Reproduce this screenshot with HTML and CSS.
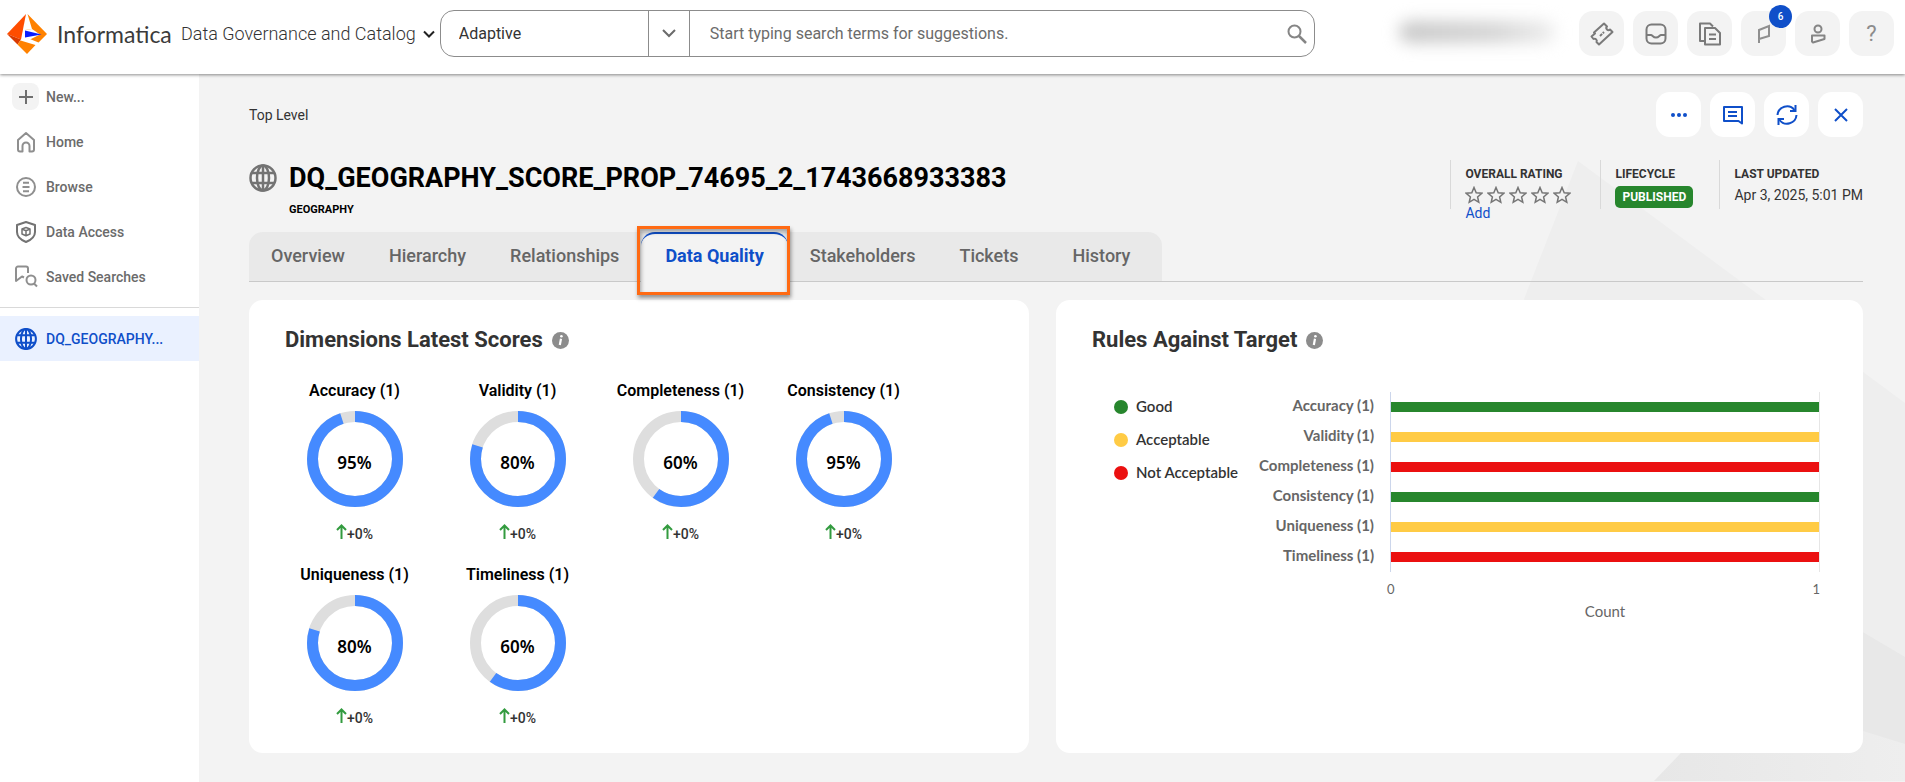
FILE: index.html
```html
<!DOCTYPE html>
<html lang="en">
<head>
<meta charset="utf-8">
<title>Data Governance and Catalog</title>
<link rel="stylesheet" href="styles.css">
</head>
<body>
<header class="topbar">
  <a class="brand" href="#" aria-label="Informatica home">
    <svg class="brand-mark" viewBox="0 0 40 40" aria-hidden="true">
      <path d="M19 0 0 20l14 5.500z" fill="#ff4d00"/>
      <path d="M0 20l10.500 10.500L14 25.500z" fill="#d93a00"/>
      <path d="M20.500 0 40 20l-8.500 8.500L18 23v-7l7-1z" fill="#ff8200"/>
      <path d="M13.500 26.500 28.500 31 20 40l-9.500-9.500z" fill="#ff8200"/>
      <path d="M25 15l-7 1v7.500l5 2 10-5z" fill="#fff"/>
      <path d="M18 16.500l16.500 4L18 23.500z" fill="#0a1cff"/>
    </svg>
    <span class="brand-name">Informatica</span>
  </a>
  <button class="product" type="button">Data Governance and Catalog
    <svg width="12" height="8" viewBox="0 0 12 8" fill="none" stroke="#222" stroke-width="2" aria-hidden="true"><path d="M1 1.500l5 5 5-5"/></svg>
  </button>
  <form class="search" role="search">
    <div class="scope">
      <select class="scope-select" aria-label="Search scope"><option>Adaptive</option></select>
      <span class="scope-arrow"><svg width="14" height="9" viewBox="0 0 14 9" fill="none" stroke="#6b6b6b" stroke-width="2" aria-hidden="true"><path d="M1 1l6 6 6-6"/></svg></span>
    </div>
    <input class="search-input" type="text" aria-label="Search" placeholder="Start typing search terms for suggestions.">
    <button class="search-btn" type="submit" aria-label="Search"><svg width="20" height="20" viewBox="0 0 20 20" fill="none" stroke="#858585" stroke-width="2" aria-hidden="true"><circle cx="7.500" cy="7.500" r="6"/><path d="M12 12l7 7" stroke-width="2.500"/></svg></button>
  </form>
  <div class="account" aria-hidden="true"></div>
  <nav class="tools" aria-label="Tools">
    <button class="tool" type="button" aria-label="Tickets"><svg width="24" height="24" viewBox="0 0 24 24" fill="none" stroke="#7a7a7a" stroke-width="2" stroke-linejoin="round" aria-hidden="true"><path d="M14 1.500l3 3a2 2 0 0 0 3 3l2.500 2.500L9 22.500l-2.500-2.500a2.200 2.200 0 0 0-3-3L1.500 14.500l3.500-3-1-1z"/><path d="M10 14l4-4" stroke-dasharray="3 1"/></svg></button>
    <button class="tool" type="button" aria-label="Inbox"><svg width="22" height="22" viewBox="0 0 22 22" fill="none" stroke="#7a7a7a" stroke-width="2" stroke-linejoin="round" aria-hidden="true"><rect x="1.500" y="1.500" width="19" height="19" rx="5"/><path d="M2 12h4c1.500 0 2 2.500 5 2.500s3.500-2.500 5-2.500h4"/></svg></button>
    <button class="tool" type="button" aria-label="Documents"><svg width="24" height="24" viewBox="0 0 24 24" fill="none" stroke="#7a7a7a" stroke-width="2" stroke-linejoin="round" aria-hidden="true"><path d="M7 19H2V1.500h10l3 3"/><path d="M7 6h10l5 5v11.500H7z"/><path d="M11 12.500h7M11 17h7"/></svg></button>
    <button class="tool" type="button" aria-label="Notifications, 6 new"><svg width="14" height="20" viewBox="0 0 14 20" fill="none" stroke="#8f8f8f" stroke-width="2" aria-hidden="true"><path d="M2 19V6l10-4v10L2 15"/></svg><span class="badge">6</span></button>
    <button class="tool" type="button" aria-label="Profile"><svg width="16" height="20" viewBox="0 0 16 20" fill="none" stroke="#858585" stroke-width="2" stroke-linejoin="round" aria-hidden="true"><circle cx="8" cy="5" r="3.500"/><path d="M2 11.500h12.500V15L3 18.500l-1-1z"/></svg></button>
    <button class="tool help" type="button" aria-label="Help">?</button>
  </nav>
</header>

<div class="shell">
  <nav class="sidebar" aria-label="Main">
    <a class="side-item" href="#"><span class="side-icon new"><svg width="16" height="16" viewBox="0 0 16 16" fill="none" stroke="#6f6f6f" stroke-width="2" aria-hidden="true"><path d="M8 1v14M1 8h14"/></svg></span>New...</a>
    <a class="side-item" href="#"><span class="side-icon"><svg width="20" height="22" viewBox="0 0 20 22" fill="none" stroke="#8f8f8f" stroke-width="2" stroke-linejoin="round" aria-hidden="true"><path d="M2 9l8-7 8 7v9.500a2 2 0 0 1-2 2h-2.500V15a3.500 3.500 0 0 0-7 0v5.500H4a2 2 0 0 1-2-2z"/></svg></span>Home</a>
    <a class="side-item" href="#"><span class="side-icon"><svg width="20" height="20" viewBox="0 0 20 20" fill="none" stroke="#8f8f8f" stroke-width="2" aria-hidden="true"><circle cx="10" cy="10" r="9"/><path d="M7 5.800h6M6.500 10h7M7 14.200h6"/></svg></span>Browse</a>
    <a class="side-item" href="#"><span class="side-icon"><svg width="22" height="22" viewBox="0 0 22 22" fill="none" stroke="#737373" stroke-width="2" stroke-linejoin="round" aria-hidden="true"><path d="M11 1l9 3v7c0 5-4 8-9 10-5-2-9-5-9-10V4z"/><path d="M11 6.500l4 1.500v5l-4 1.700L7 13V8zM7 8l4 1.700L15 8M11 9.700v5" stroke-width="1.500"/></svg></span>Data Access</a>
    <a class="side-item" href="#"><span class="side-icon"><svg width="24" height="23" viewBox="0 0 24 23" fill="none" stroke="#8f8f8f" stroke-width="2" stroke-linejoin="round" aria-hidden="true"><path d="M10 12.500l-2-1-6 4.500V3.500a2 2 0 0 1 2-2h8a2 2 0 0 1 2 2V8"/><circle cx="17" cy="15" r="4.500"/><path d="M20 18.500l3 3"/></svg></span>Saved Searches</a>
    <hr class="side-rule">
    <a class="side-item active" href="#" aria-current="page"><span class="side-icon"><svg width="22" height="22" viewBox="0 0 24 24" fill="none" stroke="#0f4fc9" stroke-width="2.200" aria-hidden="true"><circle cx="12" cy="12" r="10.800"/><ellipse cx="12" cy="12" rx="5.500" ry="10.800"/><path d="M12 1v22M2 8h20M2 16h20"/></svg></span>DQ_GEOGRAPHY...</a>
  </nav>

  <main class="content">
    <svg class="backdrop" width="400" height="707" viewBox="0 0 400 707" aria-hidden="true">
      <defs><linearGradient id="floor"><stop offset="0" stop-color="#e7e7e7"/><stop offset="1" stop-color="#eeeeee"/></linearGradient></defs>
      <path d="M73 87 400 329V600H177L19 225z" fill="#eeeeee"/>
      <path d="M300 524 400 583v100L300 640z" fill="#e8e8e8"/>
      <path d="M149 707 222 631l136 26 42 13v37z" fill="url(#floor)"/>
    </svg>
    <div class="crumb-row">
      <span class="crumb">Top Level</span>
      <div class="actions">
        <button class="action" type="button" aria-label="More"><svg width="18" height="6" viewBox="0 0 18 6" fill="#0f4fc9" aria-hidden="true"><circle cx="3" cy="3" r="2"/><circle cx="9" cy="3" r="2"/><circle cx="15" cy="3" r="2"/></svg></button>
        <button class="action" type="button" aria-label="Comments"><svg width="20" height="20" viewBox="0 0 20 20" fill="none" stroke="#0f4fc9" stroke-width="2" stroke-linejoin="round" aria-hidden="true"><path d="M1 2h18v16.500L15.500 16H1z"/><path d="M5 7h9M5 11h9"/></svg></button>
        <button class="action" type="button" aria-label="Refresh"><svg width="22" height="22" viewBox="0 0 22 22" fill="none" stroke="#0f4fc9" stroke-width="2" aria-hidden="true"><path d="M1.500 11A9.500 9.500 0 0 1 18.500 6M20.500 11A9.500 9.500 0 0 1 3.500 16"/><path d="M19.500 1v6H14M2.500 21v-6H8"/></svg></button>
        <button class="action" type="button" aria-label="Close"><svg width="14" height="14" viewBox="0 0 14 14" fill="none" stroke="#0f4fc9" stroke-width="2" aria-hidden="true"><path d="M1 1l12 12M13 1L1 13"/></svg></button>
      </div>
    </div>

    <div class="asset">
      <svg class="asset-icon" width="28" height="28" viewBox="0 0 28 28" fill="none" stroke="#737373" stroke-width="2.500" aria-hidden="true"><circle cx="14" cy="14" r="12.500"/><ellipse cx="14" cy="14" rx="6" ry="12.500"/><path d="M14 1v26M3 9h22M3 19h22"/></svg>
      <div class="asset-text">
        <h1 class="asset-name">DQ_GEOGRAPHY_SCORE_PROP_74695_2_1743668933383</h1>
        <p class="asset-type">GEOGRAPHY</p>
      </div>
      <dl class="facts">
        <div class="fact rating">
          <dt>OVERALL RATING</dt>
          <dd>
            <span class="stars" role="img" aria-label="No rating">
              <svg viewBox="0 0 18 18" aria-hidden="true"><path d="M9 1.500l2.200 5.200 5.600.5-4.200 3.700 1.200 5.400L9 13.400l-4.800 2.900 1.200-5.400-4.200-3.700 5.600-.5z"/></svg>
              <svg viewBox="0 0 18 18" aria-hidden="true"><path d="M9 1.500l2.200 5.200 5.600.5-4.200 3.700 1.200 5.400L9 13.400l-4.800 2.900 1.200-5.400-4.200-3.700 5.600-.5z"/></svg>
              <svg viewBox="0 0 18 18" aria-hidden="true"><path d="M9 1.500l2.200 5.200 5.600.5-4.200 3.700 1.200 5.400L9 13.400l-4.800 2.900 1.200-5.400-4.200-3.700 5.600-.5z"/></svg>
              <svg viewBox="0 0 18 18" aria-hidden="true"><path d="M9 1.500l2.200 5.200 5.600.5-4.200 3.700 1.200 5.400L9 13.400l-4.800 2.900 1.200-5.400-4.200-3.700 5.600-.5z"/></svg>
              <svg viewBox="0 0 18 18" aria-hidden="true"><path d="M9 1.500l2.200 5.200 5.600.5-4.200 3.700 1.200 5.400L9 13.400l-4.800 2.900 1.200-5.400-4.200-3.700 5.600-.5z"/></svg>
            </span>
            <a class="add" href="#">Add</a>
          </dd>
        </div>
        <div class="fact lifecycle"><dt>LIFECYCLE</dt><dd><span class="status">PUBLISHED</span></dd></div>
        <div class="fact"><dt>LAST UPDATED</dt><dd>Apr 3, 2025, 5:01 PM</dd></div>
      </dl>
    </div>

    <div class="tab-row">
      <div class="tabs" role="tablist">
        <button class="tab" type="button" role="tab">Overview</button>
        <button class="tab" type="button" role="tab">Hierarchy</button>
        <button class="tab" type="button" role="tab">Relationships</button>
        <button class="tab selected" type="button" role="tab" aria-selected="true">Data Quality</button>
        <button class="tab" type="button" role="tab">Stakeholders</button>
        <button class="tab" type="button" role="tab">Tickets</button>
        <button class="tab" type="button" role="tab">History</button>
      </div>
    </div>

    <div class="cards">
      <section class="card">
        <h2 class="card-title">Dimensions Latest Scores
          <svg width="17" height="17" viewBox="0 0 17 17" role="img" aria-label="Info"><circle cx="8.500" cy="8.500" r="8.500" fill="#8c8c8c"/><path d="M9 6.800 7.800 13" stroke="#fff" stroke-width="2.200"/><circle cx="9.400" cy="4.300" r="1.300" fill="#fff"/></svg>
        </h2>
        <div class="scores" id="scores"></div>
      </section>
      <section class="card">
        <h2 class="card-title">Rules Against Target
          <svg width="17" height="17" viewBox="0 0 17 17" role="img" aria-label="Info"><circle cx="8.500" cy="8.500" r="8.500" fill="#8c8c8c"/><path d="M9 6.800 7.800 13" stroke="#fff" stroke-width="2.200"/><circle cx="9.400" cy="4.300" r="1.300" fill="#fff"/></svg>
        </h2>
        <div class="rules">
          <ul class="legend">
            <li><span class="dot good"></span>Good</li>
            <li><span class="dot fair"></span>Acceptable</li>
            <li><span class="dot bad"></span>Not Acceptable</li>
          </ul>
          <div class="chart">
            <div class="names" id="names"></div>
            <div class="plot" id="plot"></div>
            <div class="axis"><div class="ticks"><span>0</span><span>1</span></div><div class="axis-title">Count</div></div>
          </div>
        </div>
      </section>
    </div>
  </main>
</div>
<script src="app.js"></script>
</body>
</html>
```

FILE: styles.css
```css
* { box-sizing: border-box; }

body {
  margin: 0;
  min-height: 100vh;
  display: flex;
  flex-direction: column;
  background: #f3f3f3;
  color: #333;
  font: 14px/20px Roboto, sans-serif;
}

button, input, select { font: inherit; color: inherit; }
button { border: 0; padding: 0; background: none; }
a { text-decoration: none; }
svg { flex: none; display: block; }

/* Top bar */
.topbar {
  position: relative;
  z-index: 1;
  display: flex;
  align-items: center;
  height: 74px;
  padding: 0 11px 7px 7px;
  background: #fff;
  box-shadow: 0 1px 3px rgba(0, 0, 0, .45);
}
.brand { display: flex; align-items: center; gap: 10px; color: #3b3b3b; }
.brand-mark { width: 40px; height: 40px; }
.brand-name { font: 23px/28px Lato, sans-serif; width: 114px; }
.product {
  display: flex;
  align-items: center;
  gap: 7px;
  margin-left: 10px;
  font-size: 18px;
  font-weight: 300;
  white-space: nowrap;
}
.search {
  display: flex;
  width: 875px;
  height: 47px;
  margin-left: 5px;
  border: 1px solid #8c8c8c;
  border-radius: 14px;
  font-size: 16px;
}
.scope { display: flex; position: relative; width: 249px; border-right: 1px solid #8c8c8c; }
.scope-select {
  appearance: none;
  width: 100%;
  padding: 0 18px;
  border: 0;
  background: none;
}
.scope-arrow {
  position: absolute;
  inset: 0 0 0 auto;
  display: flex;
  align-items: center;
  justify-content: center;
  width: 41px;
  border-left: 1px solid #8c8c8c;
  pointer-events: none;
}
.search-input { flex: 1; padding: 0 20px; border: 0; background: none; }
.search-input::placeholder { color: #6b6b6b; opacity: 1; }
.search-btn { padding: 0 7px; }
.account {
  width: 156px;
  height: 22px;
  margin: 0 24px 4px auto;
  border-radius: 11px;
  background: linear-gradient(90deg, #c8c8c8, #d4d4d4 60%, #eee);
  filter: blur(8px);
}
.tools { display: flex; gap: 9px; }
.tool, .action {
  position: relative;
  display: flex;
  align-items: center;
  justify-content: center;
  width: 45px;
  height: 45px;
  border-radius: 14px;
  background: #f3f3f3;
}
.help { font-size: 22px; color: #8c8c8c; }
.badge {
  position: absolute;
  top: -6px;
  right: -6px;
  width: 23px;
  height: 23px;
  border-radius: 50%;
  background: #0f4fc9;
  color: #fff;
  font: 500 10px/23px Roboto, sans-serif;
  text-align: center;
}

/* Sidebar */
.shell { flex: 1; display: flex; }
.sidebar { flex: none; width: 199px; background: #fff; }
.side-item {
  display: flex;
  align-items: center;
  gap: 7px;
  height: 45px;
  padding-left: 12px;
  color: #6b6b6b;
  font-weight: 500;
}
.side-icon { display: flex; align-items: center; justify-content: center; width: 27px; height: 27px; }
.new { border-radius: 8px; background: #f3f3f3; }
.side-rule { margin: 8px 0; border: 0; border-top: 1px solid #d9d9d9; }
.active { background: #eaf1ff; color: #0f4fc9; }

/* Content */
.content {
  position: relative;
  z-index: 0;
  flex: 1;
  display: flex;
  flex-direction: column;
  min-width: 0;
  padding: 18px 42px 29px 50px;
  overflow: hidden;
}
.backdrop { position: absolute; z-index: -1; top: 0; right: 0; }
.crumb-row { display: flex; align-items: center; justify-content: space-between; }
.crumb { font-size: 14px; }
.actions { display: flex; gap: 9px; }
.action { background: #fff; }

.asset { display: flex; height: 72px; margin-top: 23px; }
.asset-icon { margin: 4px 12px 0 0; }
.asset-text { flex: 1; }
.asset-name { margin: 2px 0 0; color: #000; font-size: 27px; line-height: 32px; }
.asset-type { margin: 7px 0 0; color: #000; font-size: 11px; line-height: 18px; font-weight: 700; }

.facts { display: flex; height: 49px; margin: 0; }
.fact { padding: 6px 0 0 14px; border-left: 1px solid #d9d9d9; }
.fact dt { font-size: 12px; line-height: 16px; font-weight: 700; }
.fact dd { margin: 4px 0 0; line-height: 18px; white-space: nowrap; }
.rating { width: 150px; }
.lifecycle { width: 119px; }
.stars { display: flex; gap: 4px; }
.stars svg { width: 18px; height: 18px; fill: none; stroke: #757575; stroke-width: 1.5; }
.add { color: #0f4fc9; }
.status {
  display: inline-block;
  padding: 0 7px;
  border-radius: 5px;
  background: #27862d;
  color: #fff;
  font-size: 12px;
  line-height: 22px;
  font-weight: 700;
}

/* Tabs */
.tab-row { display: flex; border-bottom: 1px solid #c9c9c9; }
.tabs { display: flex; border-radius: 14px 14px 0 0; background: #e9e9e9; }
.tab { height: 49px; padding: 0 22px 2px; color: #666; font-size: 18px; font-weight: 500; }
.tab:last-child { padding: 0 32px 2px; }
.selected {
  position: relative;
  height: 50px;
  margin-bottom: -1px;
  padding: 0 24px 5px;
  border-top: 2px solid #0f4fc9;
  border-radius: 14px 14px 0 0;
  background: #f3f3f3;
  color: #0f4fc9;
  font-weight: 700;
}
.selected::after {
  content: "";
  position: absolute;
  inset: -8px -2px -13px -4px;
  border: 3px solid #ff6a13;
  box-shadow: 1px 3px 4px rgba(0, 0, 0, .4), inset 1px 3px 4px rgba(0, 0, 0, .35);
}

/* Cards */
.cards { flex: 1; display: grid; grid-template-columns: 780fr 807fr; gap: 27px; margin-top: 18px; }
.card { padding: 26px 24px 4px; border-radius: 14px; background: #fff; }
.card-title {
  display: flex;
  align-items: center;
  gap: 9px;
  margin: 0 0 26px 12px;
  font-size: 22px;
  line-height: 28px;
  font-weight: 700;
}
.scores { display: grid; grid-template-columns: repeat(4, 163px); }
.score { display: flex; flex-direction: column; align-items: center; height: 184px; color: #000; }
.score-name { font-size: 16px; line-height: 22px; font-weight: 600; }
.ring { display: grid; place-items: center; width: 96px; height: 96px; margin-top: 9px; }
.ring > * { grid-area: 1 / 1; }
.ring circle { fill: none; stroke-width: 11; }
.ring-track { stroke: #dedede; }
.ring-fill { stroke: #458aff; }
.ring-value { padding-top: 8px; font: 600 17px/22px "Noto Sans", sans-serif; }
.delta { display: flex; align-items: flex-start; margin-top: 17px; color: #333; font-size: 14px; line-height: 20px; font-weight: 500; }

.rules { display: flex; margin-left: 34px; }
.legend { width: 140px; margin: 10px 0 0; padding: 0; list-style: none; font: 600 15px/33px Lato, sans-serif; }
.legend li { display: flex; align-items: center; gap: 8px; white-space: nowrap; }
.dot { width: 14px; height: 14px; border-radius: 50%; }
.good { background: #27862d; }
.fair { background: #ffcb45; }
.bad { background: #eb1010; }
.chart {
  flex: 1;
  display: grid;
  grid-template-columns: 120px 1fr;
  column-gap: 16px;
  margin: 12px 19px 0 0;
  font: 15px/30px Lato, sans-serif;
  color: #666;
}
.names { margin: -2px 0 2px; font-weight: 700; text-align: right; white-space: nowrap; }
.plot { display: grid; grid-auto-rows: 30px; align-items: center; border: solid #ccd6eb; border-width: 0 1px; border-right-color: #e6e6e6; }
.bar { height: 10px; }
.axis { grid-column: 2; }
.ticks { display: flex; justify-content: space-between; margin: 5px 0 0 -3px; font-size: 13px; line-height: 24px; }
.axis-title { text-align: center; line-height: 20px; }
```

FILE: app.js
```js
const dimensions = [
  ["Accuracy", 95, "good"],
  ["Validity", 80, "fair"],
  ["Completeness", 60, "bad"],
  ["Consistency", 95, "good"],
  ["Uniqueness", 80, "fair"],
  ["Timeliness", 60, "bad"]
];

document.getElementById("scores").innerHTML = dimensions.map(([name, value]) => `
  <div class="score">
    <span class="score-name">${name} (1)</span>
    <div class="ring">
      <svg width="96" height="96" viewBox="0 0 96 96" aria-hidden="true">
        <circle class="ring-track" cx="48" cy="48" r="42.500"/>
        <circle class="ring-fill" cx="48" cy="48" r="42.500" pathLength="100" stroke-dasharray="${value} 100" transform="rotate(-90 48 48)"/>
      </svg>
      <span class="ring-value">${value}%</span>
    </div>
    <span class="delta"><svg width="11" height="15" viewBox="0 0 11 15" fill="none" stroke="#339b3f" stroke-width="2" aria-hidden="true"><path d="M5.500 15V1.500M1 6l4.500-4.500L10 6"/></svg>+0%</span>
  </div>`).join("");

document.getElementById("names").innerHTML =
  dimensions.map(([name]) => `<div>${name} (1)</div>`).join("");
document.getElementById("plot").innerHTML =
  dimensions.map(([, , level]) => `<div class="bar ${level}"></div>`).join("");
```
